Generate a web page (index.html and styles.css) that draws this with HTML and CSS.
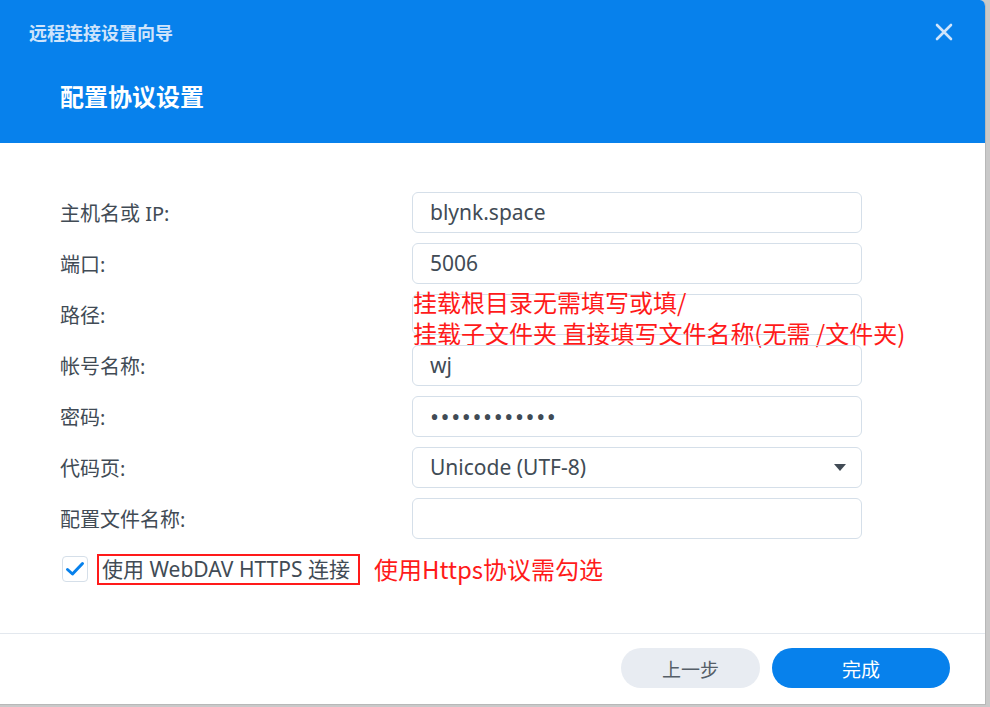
FILE: index.html
```html
<!DOCTYPE html>
<html>
<head>
    <title>远程连接设置向导</title>
    <link rel="stylesheet" href="styles.css">
</head>
<body>
    <div class="dialog">
        <div class="header">
            <div class="header-top">
                <span class="wizard-title">远程连接设置向导</span>
                <svg class="close" width="18" height="18" viewBox="0 0 18 18">
                    <path d="M2 2 L16 16 M16 2 L2 16" stroke="#cfe4fb" stroke-width="2.6" stroke-linecap="round"/>
                </svg>
            </div>
            <div class="step-title">配置协议设置</div>
        </div>
        <div class="content">
            <div class="row">
                <label class="label">主机名或 IP:</label>
                <div class="field">blynk.space</div>
            </div>
            <div class="row">
                <label class="label">端口:</label>
                <div class="field">5006</div>
            </div>
            <div class="row path-row">
                <label class="label">路径:</label>
                <div class="field"></div>
                <div class="note note-path">挂载根目录无需填写或填/<br>挂载子文件夹 直接填写文件名称(无需 /文件夹)</div>
            </div>
            <div class="row">
                <label class="label">帐号名称:</label>
                <div class="field">wj</div>
            </div>
            <div class="row">
                <label class="label">密码:</label>
                <div class="field dots">••••••••••••</div>
            </div>
            <div class="row">
                <label class="label">代码页:</label>
                <div class="field select">
                    <span>Unicode (UTF-8)</span>
                    <svg width="12" height="7" viewBox="0 0 12 7"><path d="M0 0 H12 L6 7 Z" fill="#414b55"/></svg>
                </div>
            </div>
            <div class="row">
                <label class="label">配置文件名称:</label>
                <div class="field"></div>
            </div>
            <div class="check-row">
                <span class="checkbox">
                    <svg width="20" height="16" viewBox="0 0 20 16"><path d="M2.5 8.5 L7.5 13 L17.5 2.5" fill="none" stroke="#0781ec" stroke-width="3" stroke-linecap="round" stroke-linejoin="round"/></svg>
                </span>
                <span class="check-label">使用 WebDAV HTTPS 连接</span>
                <span class="note note-check">使用Https协议需勾选</span>
            </div>
        </div>
        <div class="footer">
            <button class="btn btn-back">上一步</button>
            <button class="btn btn-done">完成</button>
        </div>
    </div>
</body>
</html>
```

FILE: styles.css
```css
body {
    margin: 0;
    background: #c9c9c9;
    font-family: "Noto Sans", "Noto Sans CJK SC", sans-serif;
    color: #414b55;
}
.dialog {
    width: 985px;
    height: 704px;
    background: #fff;
    border-top-right-radius: 6px;
    border-right: 1px solid #b8b8b8;
    border-bottom: 1px solid #b8b8b8;
    display: flex;
    flex-direction: column;
    overflow: hidden;
}
.header {
    background: #0781ec;
    height: 143px;
    flex-shrink: 0;
    box-sizing: border-box;
    padding: 20px 0 0 29px;
}
.header-top {
    display: flex;
    justify-content: space-between;
    align-items: center;
    padding-right: 32px;
    height: 24px;
}
.wizard-title {
    font-size: 18px;
    font-weight: bold;
    color: #cfe4fb;
}
.step-title {
    margin: 39px 0 0 31px;
    font-size: 24px;
    font-weight: bold;
    color: #fff;
    line-height: 28px;
}
.content {
    flex: 1;
    padding: 49px 0 0 60px;
}
.row {
    display: flex;
    align-items: center;
    height: 41px;
    margin-bottom: 10px;
    position: relative;
}
.label {
    width: 352px;
    font-size: 20px;
}
.field {
    width: 450px;
    height: 41px;
    box-sizing: border-box;
    border: 1px solid #d5dfe9;
    border-radius: 6px;
    padding: 0 17px;
    font-size: 21px;
    line-height: 39px;
    display: flex;
    align-items: center;
}
.dots {
    font-size: 24px;
    letter-spacing: 1.6px;
}
.select {
    justify-content: space-between;
    padding-right: 15px;
}
.note {
    color: #ff1a1a;
    font-family: "Noto Sans CJK SC", sans-serif;
    font-size: 24px;
}
.note-path {
    position: absolute;
    left: 353px;
    top: -8px;
    line-height: 31px;
    white-space: nowrap;
}
.check-row {
    display: flex;
    align-items: center;
    margin-top: 14px;
    height: 32px;
}
.checkbox {
    width: 24px;
    height: 24px;
    margin-left: 2px;
    border: 1px solid #d5dfe9;
    border-radius: 4px;
    display: flex;
    align-items: center;
    justify-content: center;
}
.check-label {
    margin-left: 9px;
    border: 2px solid #ff1a1a;
    padding: 0 8px 0 3px;
    height: 27px;
    line-height: 27px;
    font-size: 21px;
    white-space: nowrap;
}
.note-check {
    margin-left: 14px;
    line-height: 30px;
}
.footer {
    height: 71px;
    flex-shrink: 0;
    box-sizing: border-box;
    border-top: 1px solid #e3e8ee;
    display: flex;
    justify-content: flex-end;
    align-items: flex-start;
    padding: 14px 35px 0 0;
    gap: 12px;
}
.btn {
    height: 40px;
    border: none;
    border-radius: 20px;
    font-family: "Noto Sans CJK SC", sans-serif;
    font-size: 19px;
    cursor: pointer;
}
.btn-back {
    width: 139px;
    background: #e8ecf2;
    color: #555e68;
}
.btn-done {
    width: 178px;
    background: #0781ec;
    color: #fff;
}
```
